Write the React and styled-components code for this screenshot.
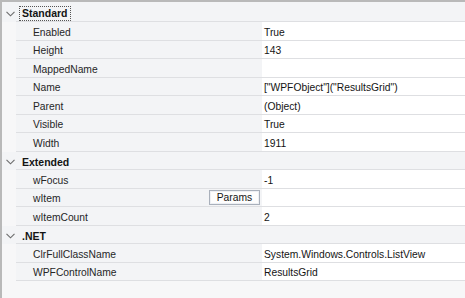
import React from 'react';
import styled, { createGlobalStyle } from 'styled-components';

const GlobalStyle = createGlobalStyle`
  html, body {
    margin: 0;
    padding: 0;
    background: #f7f7f8;
  }
  body {
    font-family: "Liberation Sans", Arial, sans-serif;
    font-size: 10.3px;
    color: #141414;
  }
`;

const Grid = styled.div`
  width: 465px;
  height: 298px;
  box-sizing: border-box;
  border-top: 2px solid #b9b9b9;
  border-left: 2px solid #b9b9b9;
  background: #f7f7f8;
  overflow: hidden;
`;

const CategoryRow = styled.div`
  display: flex;
  align-items: center;
  height: ${p => p.$first ? '20px' : '18.5px'};
  padding-top: 3px;
  box-sizing: border-box;
  background: #f3f4f6;
  position: relative;

  &::after {
    content: '';
    position: absolute;
    left: 14px;
    right: 0;
    bottom: 0;
    height: 1px;
    background: #dedfe2;
  }
`;

const Chevron = styled.svg`
  width: 9px;
  height: 6px;
  margin: 0 4px 0 4px;
  flex: none;
`;

const CategoryLabel = styled.span`
  font-weight: bold;
  font-size: 10.5px;
  padding: 1px 2px;
  border: 1px dotted ${p => p.$focus ? '#555' : 'transparent'};
  line-height: 11px;
`;

const PropRow = styled.div`
  display: flex;
  height: 18.5px;
  box-sizing: border-box;
  margin-left: 14px;
  border-bottom: 1px solid #dedfe2;
`;

const NameCell = styled.div`
  width: 246px;
  flex: none;
  display: flex;
  align-items: center;
  justify-content: space-between;
  padding: 3px 0 0 17px;
  box-sizing: border-box;
  background: #f3f4f6;
  color: #262626;
`;

const ValueCell = styled.div`
  flex: 1;
  display: flex;
  align-items: center;
  padding: 3px 0 0 2px;
  background: #ffffff;
  color: #141414;
`;

const ParamsButton = styled.button`
  font-family: inherit;
  font-size: 10.3px;
  color: #141414;
  height: 15px;
  width: 51px;
  margin: -2px 2px 0 0;
  padding: 0;
  background: #fdfdfd;
  border: 1px solid #a9b0bb;
  box-shadow: inset 0 0 0 1px #eef0f4;
`;

const ChevronIcon = () => (
  <Chevron viewBox="0 0 9 6">
    <path d="M0.5 0.8 L4.5 4.8 L8.5 0.8" fill="none" stroke="#6b6b6b" strokeWidth="1.1" />
  </Chevron>
);

const categories = [
  {
    name: 'Standard',
    focus: true,
    props: [
      ['Enabled', 'True'],
      ['Height', '143'],
      ['MappedName', ''],
      ['Name', '["WPFObject"]("ResultsGrid")'],
      ['Parent', '(Object)'],
      ['Visible', 'True'],
      ['Width', '1911'],
    ],
  },
  {
    name: 'Extended',
    props: [
      ['wFocus', '-1'],
      ['wItem', '', true],
      ['wItemCount', '2'],
    ],
  },
  {
    name: '.NET',
    props: [
      ['ClrFullClassName', 'System.Windows.Controls.ListView'],
      ['WPFControlName', 'ResultsGrid'],
    ],
  },
];

const App = () => (
  <>
    <GlobalStyle />
    <Grid>
      {categories.map((cat, i) => (
        <React.Fragment key={cat.name}>
          <CategoryRow $first={i === 0}>
            <ChevronIcon />
            <CategoryLabel $focus={cat.focus}>{cat.name}</CategoryLabel>
          </CategoryRow>
          {cat.props.map(([name, value, params]) => (
            <PropRow key={name}>
              <NameCell>
                <span>{name}</span>
                {params && <ParamsButton>Params</ParamsButton>}
              </NameCell>
              <ValueCell>{value}</ValueCell>
            </PropRow>
          ))}
        </React.Fragment>
      ))}
    </Grid>
  </>
);

export default App;
